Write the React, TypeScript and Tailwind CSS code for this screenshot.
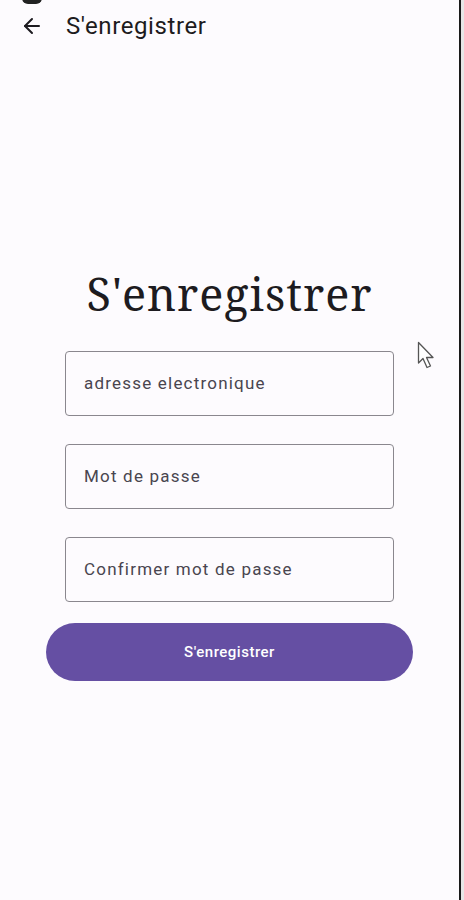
import { ArrowLeft } from "lucide-react";

const fields = ["adresse electronique", "Mot de passe", "Confirmer mot de passe"];

function Cursor() {
  return (
    <svg width="20" height="30" viewBox="0 0 20 30" className="absolute left-[417px] top-[341px]">
      <path
        d="M1.5 1.5 L1.5 22 L6 17.5 L10 26.5 L13.5 25 L9.5 16.5 L16 16.5 Z"
        fill="white"
        stroke="#555"
        strokeWidth="1.3"
        strokeLinejoin="round"
      />
    </svg>
  );
}

export default function App() {
  return (
    <div className="flex w-[464px] h-[900px] bg-[#fdfbfe] font-['Roboto',sans-serif]">
      <div className="relative w-[459px] h-full flex flex-col">
        <div className="absolute left-[22px] top-[-8px] w-[20px] h-[12px] rounded-full bg-[#222]" />
        <header className="flex items-center h-[50px] pt-[2px]">
          <div className="w-[66px] flex justify-center">
            <ArrowLeft size={24} strokeWidth={2} className="text-[#1d1b20] ml-[-2px]" />
          </div>
          <h1 className="text-[24px] text-[#1d1b20] tracking-[0.6px]">S'enregistrer</h1>
        </header>

        <h2 className="mt-[216px] text-center text-[45px] leading-[56px] tracking-[1px] text-[#1d1b20] font-['Noto_Serif','DejaVu_Serif','Liberation_Serif',serif]">
          S'enregistrer
        </h2>

        <div className="mt-[29px] flex flex-col items-center gap-[28px]">
          {fields.map((f) => (
            <div
              key={f}
              className="w-[329px] h-[65px] flex items-center px-[18px] pt-[1px] rounded-[4px] border border-[#8a878e] text-[17px] tracking-[1.2px] text-[#49454f]"
            >
              {f}
            </div>
          ))}
        </div>

        <div className="mt-[21px] flex justify-center">
          <button className="w-[367px] h-[58px] rounded-full bg-[#654fa3] text-white text-[15px] font-medium tracking-[0.5px]">
            S'enregistrer
          </button>
        </div>

        <Cursor />
      </div>
      <div className="w-[2px] h-full bg-[#1a1a1a]" />
      <div className="w-[3px] h-full bg-[#e6e6e6]" />
    </div>
  );
}
